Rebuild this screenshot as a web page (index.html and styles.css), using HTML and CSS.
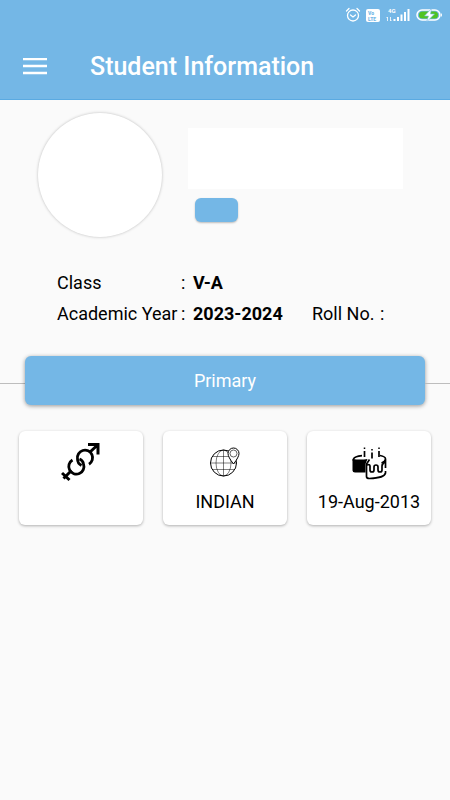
FILE: index.html
```html
<!DOCTYPE html>
<html lang="en">
<head>
<meta charset="utf-8">
<meta name="viewport" content="width=device-width, initial-scale=1">
<title>Student Information</title>
<link rel="stylesheet" href="styles.css">
</head>
<body>
<header class="app-header">
  <div class="status-bar">
    <svg class="status-icons" width="100" height="18" viewBox="0 0 100 18" aria-hidden="true">
      <g fill="none" stroke="#fff" stroke-linecap="round">
        <circle cx="8" cy="9.500" r="5.500" stroke-width="1.300"/>
        <path d="M1.500 5 4 2.500M12 2.500 14.500 5M5.500 9 8 11l2.500-2" stroke-width="1.300"/>
      </g>
      <rect x="21" y="3" width="14" height="13" rx="2" fill="#fff"/>
      <text class="volte" x="23" y="9">Vo</text>
      <text class="volte" x="23" y="15">LTE</text>
      <text class="network" x="43" y="7">4G</text>
      <path d="M42.500 15V11m-1 1 1-1M45.500 11v4m1-1-1 1" fill="none" stroke="#fff" stroke-width=".8"/>
      <path d="M48.500 13h2v2h-2zM52 11h2v4h-2zM55.500 8.500h2V15h-2zM59 6h2v9h-2zM62.500 3h2v12h-2z" fill="#fff"/>
      <rect x="72" y="4" width="23" height="10" rx="5" fill="none" stroke="#fff" stroke-width="1.500"/>
      <rect x="74" y="5.500" width="19" height="7" rx="3.500" fill="#4fc322"/>
      <path d="M96 7q2 2 0 4z" fill="#fff"/>
      <path d="m86.500 2.500-7 7.500h4l-2 6 8-8h-4z" fill="#fff" stroke="#74b7e6" stroke-width=".6"/>
    </svg>
  </div>
  <div class="toolbar">
    <button class="menu-button" type="button" aria-label="Open menu">
      <svg width="24" height="18" viewBox="0 0 24 18"><path d="M0 1h24M0 8h24M0 15h24" stroke="#fff" stroke-width="2.500"/></svg>
    </button>
    <h1 class="title">Student Information</h1>
  </div>
</header>
<main>
  <section class="profile">
    <div class="avatar"></div>
    <div class="identity">
      <div class="name"></div>
      <div class="badge"></div>
    </div>
  </section>
  <dl class="details">
    <div class="field"><dt>Class</dt><dd>V-A</dd></div>
    <div class="field"><dt>Academic Year</dt><dd>2023-2024</dd></div>
    <div class="field field-roll"><dt>Roll No.</dt><dd></dd></div>
  </dl>
  <div class="section-row">
    <button class="section-button" type="button">Primary</button>
  </div>
  <section class="cards">
    <article class="card">
      <svg width="40" height="40" viewBox="0 0 40 40" fill="none" stroke="#000" stroke-width="2.800" aria-hidden="true">
        <path d="M11.500 18A7.600 7.600 0 1 0 22.500 22Q22 18.500 18.500 17"/>
        <path d="M28 22.200A7.600 7.600 0 1 0 16.500 17Q16.500 21.500 20.500 23.500"/>
        <path d="M28.500 10.500 36 3.500M27 2.500h10v10" stroke-width="3"/>
        <path d="m10.500 28.500-8 8M1 31l7.500 7" stroke-width="3"/>
      </svg>
      <p class="card-label"></p>
    </article>
    <article class="card">
      <svg width="40" height="40" viewBox="0 0 40 40" fill="none" stroke="#000" aria-hidden="true">
        <circle cx="18.500" cy="21" r="13"/>
        <g stroke-width=".5">
          <ellipse cx="18.500" cy="21" rx="7.500" ry="13"/>
          <path d="M18.500 8v26M5.500 21h26M8 14.500h21M8 27.500h21"/>
        </g>
        <path d="M28.500 22q-5.500-7-5.500-10.500a5.500 5.500 0 0 1 11 0q0 3.500-5.500 10.500z" fill="#fff" stroke-width="1"/>
        <circle cx="28.500" cy="11.500" r="3.500" stroke-width=".6"/>
      </svg>
      <p class="card-label">INDIAN</p>
    </article>
    <article class="card">
      <svg width="40" height="40" viewBox="0 0 40 40" fill="none" stroke="#000" stroke-width="1.700" aria-hidden="true">
        <path d="M3.500 17q8 1 15 0l-2 5v8.500H6q-2.500 0-2.500-2z" fill="#000" stroke="none"/>
        <path d="M4.500 19v-2q1-2.500 8.500-3.300M31 13.500q5.500 1 5.500 3.500 0 2.500-4 4M36.500 17v9M20.500 17.500 17.500 22v12.500q0 2 3 2 15-.5 16-5.500v-2"/>
        <path d="M18 23q3-1 3 1v4q0 2 2 2t2-2v-3q0-2 2-2t2 2v3q0 2 2 2t2-2v-4q0-2 3-4" stroke-width="1.700"/>
        <path d="M15.500 9v6M23 10.500v6M30 9v6"/>
        <path d="M15.500 5.500v1.500M23 7v1.500M30 5.500v1.500" stroke-width="1.500"/>
      </svg>
      <p class="card-label">19-Aug-2013</p>
    </article>
  </section>
</main>
</body>
</html>
```
FILE: styles.css
```css
* {
  box-sizing: border-box;
}

body {
  margin: 0;
  min-height: 100vh;
  background: #fafafa;
  color: #000;
  font-family: Roboto, sans-serif;
  font-size: 18px;
  line-height: 24px;
}

button {
  border: 0;
  font: inherit;
  color: #fff;
}

h1, p, dl, dd {
  margin: 0;
}

.app-header {
  background: #74b7e6;
  border-bottom: 1px solid #5aaae2;
  color: #fff;
}

.status-bar {
  display: flex;
  justify-content: flex-end;
  height: 34px;
  padding: 6px 5px 0;
}

.volte {
  fill: #74b7e6;
  font-size: 5px;
  font-weight: 900;
}

.network {
  fill: #fff;
  font-size: 6px;
  font-weight: 700;
}

.toolbar {
  display: flex;
  align-items: center;
  gap: 43px;
  height: 65px;
  padding: 0 23px;
}

.menu-button {
  display: flex;
  padding: 0;
  background: none;
}

.title {
  font-size: 25px;
  font-weight: 500;
  line-height: 32px;
}

.profile {
  display: flex;
  gap: 26px;
  padding: 13px 47px 0 38px;
}

.avatar {
  flex: none;
  width: 124px;
  height: 124px;
  border-radius: 50%;
  background: #fff;
  box-shadow: 0 0 3px rgba(0, 0, 0, 0.25);
}

.identity {
  flex: 1;
  padding-top: 15px;
}

.name {
  height: 61px;
  background: #fff;
}

.badge {
  width: 43px;
  height: 24px;
  margin: 9px 7px 0;
  border-radius: 6px;
  background: #74b7e6;
  box-shadow: 0 1px 2px rgba(0, 0, 0, 0.25);
}

.details {
  display: grid;
  grid-template-columns: 255px 1fr;
  row-gap: 7px;
  padding: 34px 47px 0 57px;
}

.field {
  display: grid;
  grid-template-columns: 124px 1fr;
  grid-column: 1;
}

.field-roll {
  grid-template-columns: 68px 1fr;
  grid-column: 2;
}

.field dd {
  font-weight: 700;
}

.field dd::before {
  content: ":";
  display: inline-block;
  width: 12px;
  font-weight: 400;
}

.section-row {
  display: flex;
  margin-top: 30px;
}

.section-row::before,
.section-row::after {
  content: "";
  width: 25px;
  height: 27px;
  border-bottom: 1px solid #bdbdbd;
}

.section-button {
  flex: 1;
  height: 49px;
  border-radius: 6px;
  background: #74b7e6;
  box-shadow: 0 1px 4px rgba(0, 0, 0, 0.4);
}

.cards {
  display: grid;
  grid-template-columns: repeat(3, 1fr);
  gap: 20px;
  padding: 26px 19px;
}

.card {
  display: flex;
  flex-direction: column;
  align-items: center;
  gap: 8px;
  min-height: 94px;
  padding-top: 11px;
  border-radius: 6px;
  background: #fff;
  box-shadow: 0 1px 3px rgba(0, 0, 0, 0.3);
}

.card-label {
  white-space: nowrap;
}
```
